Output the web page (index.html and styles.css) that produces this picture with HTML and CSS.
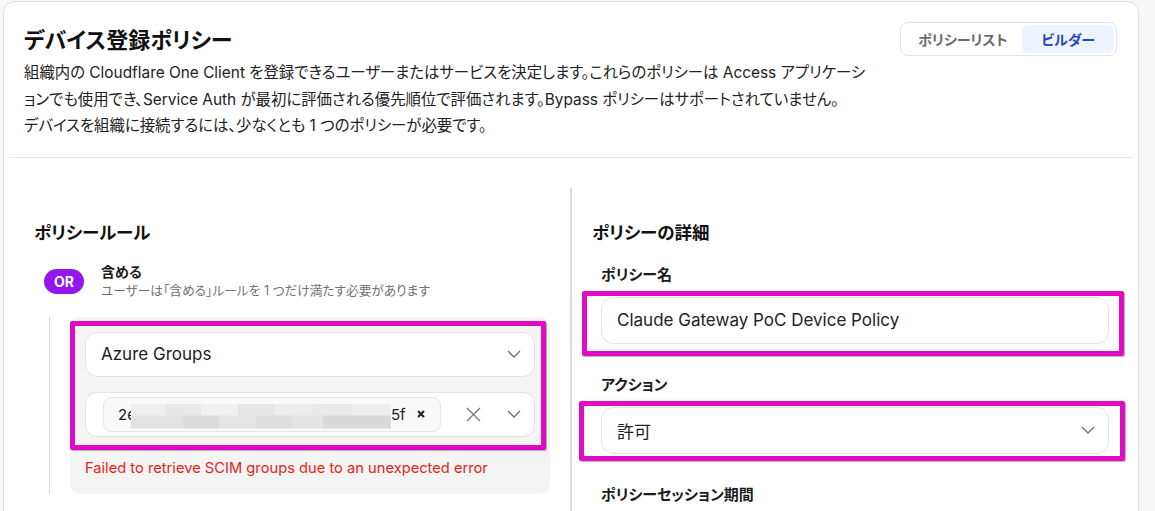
FILE: index.html
```html
<!DOCTYPE html>
<html lang="ja">
<head>
  <meta charset="utf-8">
  <meta name="viewport" content="width=device-width, initial-scale=1">
  <title>デバイス登録ポリシー</title>
  <link rel="stylesheet" href="styles.css">
</head>
<body>
  <div class="card">
    <header class="card-head">
      <div class="intro">
        <h1 class="page-title">デバイス登録ポリシー</h1>
        <p class="page-desc">組織内の Cloudflare One Client を登録できるユーザーまたはサービスを決定します。これらのポリシーは Access アプリケーシ<br>ョンでも使用でき、Service Auth が最初に評価される優先順位で評価されます。Bypass ポリシーはサポートされていません。<br>デバイスを組織に接続するには、少なくとも 1 つのポリシーが必要です。</p>
      </div>
      <div class="view-toggle">
        <button class="toggle-btn">ポリシーリスト</button>
        <button class="toggle-btn active">ビルダー</button>
      </div>
    </header>

    <hr class="divider">

    <div class="builder">
      <!-- left: rule groups -->
      <section class="rules">
        <h2 class="section-title">ポリシールール</h2>

        <div class="rule-head">
          <span class="or-badge">OR</span>
          <div>
            <div class="rule-name">含める</div>
            <div class="rule-hint">ユーザーは「含める」ルールを 1 つだけ満たす必要があります</div>
          </div>
        </div>

        <div class="rule-body">
          <div class="rule-box">
            <div class="select-stack">
              <div class="select">
                <span class="value">Azure Groups</span>
                <svg class="chevron" width="14" height="8" viewBox="0 0 14 8"><path d="M1 1l6 6 6-6"/></svg>
              </div>
              <div class="select multi">
                <span class="chip">
                  <span class="chip-text">2e</span>
                  <span class="redact"></span>
                  <span class="chip-text">5f</span>
                  <svg class="chip-remove" width="8" height="8" viewBox="0 0 8 8"><path d="M1 1l6 6M7 1L1 7"/></svg>
                </span>
                <span class="select-icons">
                  <svg class="clear" width="15" height="15" viewBox="0 0 15 15"><path d="M1 1l13 13M14 1L1 14"/></svg>
                  <svg class="chevron" width="14" height="8" viewBox="0 0 14 8"><path d="M1 1l6 6 6-6"/></svg>
                </span>
              </div>
              <span class="mark mark-rule"></span>
            </div>
            <p class="field-error">Failed to retrieve SCIM groups due to an unexpected error</p>
          </div>
        </div>
      </section>

      <!-- right: policy details form -->
      <section class="details">
        <h2 class="section-title">ポリシーの詳細</h2>

        <div class="field">
          <div class="field-label">ポリシー名</div>
          <div class="field-control">
            <div class="input-box">Claude Gateway PoC Device Policy</div>
            <span class="mark mark-name"></span>
          </div>
        </div>

        <div class="field">
          <div class="field-label">アクション</div>
          <div class="field-control">
            <div class="input-box">
              <span class="value">許可</span>
              <svg class="chevron" width="14" height="8" viewBox="0 0 14 8"><path d="M1 1l6 6 6-6"/></svg>
            </div>
            <span class="mark mark-action"></span>
          </div>
        </div>

        <div class="field">
          <div class="field-label">ポリシーセッション期間</div>
        </div>
      </section>
    </div>
  </div>
</body>
</html>
```

FILE: styles.css
```css
* {
  margin: 0;
  padding: 0;
  box-sizing: border-box;
}

body {
  font-family: Inter, "Noto Sans CJK JP", sans-serif;
  font-feature-settings: "palt";
  background: #f7f7f7;
  color: #1c1c1c;
  overflow: hidden;
}

.card {
  margin: 1px 0 0 3px;
  width: 1136px;
  min-height: 640px;
  background: #fff;
  border: 1px solid #dedede;
  border-radius: 12px;
}

.card-head {
  display: flex;
  justify-content: space-between;
  align-items: flex-start;
  padding: 20px 21px 0 20px;
}

.page-title {
  font-size: 22px;
  font-weight: 700;
  line-height: 30px;
  margin-top: 3px;
  color: #111;
}

.page-desc {
  font-size: 15.4px;
  line-height: 26.5px;
  margin-top: 5px;
  white-space: nowrap;
  color: #222;
}

.view-toggle {
  display: flex;
  flex-shrink: 0;
  padding: 2px;
  border: 1px solid #e4e4e4;
  border-radius: 8px;
}

.toggle-btn {
  font: inherit;
  font-size: 14px;
  font-weight: 700;
  height: 28px;
  padding: 0 15px;
  border: 0;
  border-radius: 6px;
  background: none;
  color: #6b6b6b;
  white-space: nowrap;
}

.toggle-btn.active {
  padding: 0 19px;
  background: #edf4ff;
  color: #2447c2;
}

.divider {
  border: 0;
  border-top: 1px solid #e6e6e6;
  margin: 17px 5px 0;
}

.builder {
  display: grid;
  grid-template-columns: 563px 1fr;
  margin: 30px 5px 0;
}

.rules {
  padding: 33px 20px 0 25px;
  border-right: 2px solid #dadada;
  min-height: 420px;
}

.details {
  padding: 33px 24px 0 20px;
}

.section-title {
  font-size: 17.5px;
  font-weight: 700;
  line-height: 24px;
  color: #111;
}

/* rule group header */
.rule-head {
  display: flex;
  align-items: center;
  gap: 17px;
  margin: 18px 0 0 10px;
}

.or-badge {
  display: flex;
  align-items: center;
  justify-content: center;
  width: 40px;
  height: 25px;
  border-radius: 13px;
  background: #9616f0;
  color: #fff;
  font-size: 14px;
  font-weight: 700;
}

.rule-name {
  font-size: 14px;
  font-weight: 700;
  line-height: 18px;
}

.rule-hint {
  font-size: 12.7px;
  line-height: 20px;
  color: #727272;
}

.rule-body {
  margin: 16px 0 0 15px;
  padding-left: 20px;
  border-left: 1px solid #d6d6d6;
}

.rule-box {
  background: #f4f4f4;
  border-radius: 10px;
  padding: 15px 15px 16px;
}

.select-stack {
  position: relative;
  display: flex;
  flex-direction: column;
  gap: 15px;
}

.select {
  display: flex;
  align-items: center;
  height: 45px;
  padding: 0 13px 0 15px;
  background: #fff;
  border: 1px solid #e2e2e2;
  border-radius: 12px;
  font-size: 17px;
}

.select .value {
  flex: 1;
}

.select.multi {
  padding-left: 17px;
}

.chip {
  display: flex;
  align-items: center;
  width: 338px;
  height: 35px;
  padding: 0 15px 0 14px;
  background: #f9f9f9;
  border: 1px solid #e6e6e6;
  border-radius: 8px;
  font-size: 15px;
}

/* pixelated redaction over the group id */
.redact {
  width: 260px;
  height: 25px;
  margin: 4px 0 0 -5px;
  background:
    linear-gradient(90deg, #efefef 0 13%, #e8e8e8 13% 27%, #f1f1f1 27% 41%, #e6e6e6 41% 55%, #ededed 55% 70%, #e9e9e9 70% 85%, #eeeeee 85%) top / 100% 46% no-repeat,
    linear-gradient(90deg, #e3e3e3 0 20%, #dcdcdc 20% 34%, #e5e5e5 34% 48%, #dedede 48% 62%, #e4e4e4 62% 74%, #d9d9d9 74% 100%) bottom / 100% 54% no-repeat;
}

.chip-remove {
  margin-left: auto;
  stroke: #222;
  stroke-width: 2;
  fill: none;
}

.select-icons {
  display: flex;
  align-items: center;
  gap: 26px;
  margin-left: auto;
}

.clear {
  stroke: #7a7a7a;
  stroke-width: 1.4;
  fill: none;
}

.chevron {
  stroke: #6e6e6e;
  stroke-width: 1.3;
  fill: none;
}

.field-error {
  margin-top: 21px;
  font-size: 14.7px;
  line-height: 20px;
  color: #e3241b;
}

/* details form */
.field {
  padding-left: 9px;
  margin-top: 31px;
}

.section-title + .field {
  margin-top: 20px;
}

.field-label {
  font-size: 15px;
  font-weight: 700;
  line-height: 20px;
  margin-bottom: 12px;
}

.field-control {
  position: relative;
}

.input-box {
  display: flex;
  align-items: center;
  height: 47px;
  padding: 0 13px 0 15px;
  border: 1px solid #e3e3e3;
  border-radius: 12px;
  font-size: 17px;
  color: #222;
}

.input-box .value {
  flex: 1;
}

/* magenta highlight frames drawn over the form */
.mark {
  position: absolute;
  border: 5px solid #e10bc5;
  border-radius: 2px;
  box-shadow: 1px 1px 1px rgba(0, 0, 0, 0.3);
  pointer-events: none;
}

.mark-rule {
  inset: -11px -11px -13px -15px;
}

.mark-name {
  inset: -6px -15px -12px -19px;
}

.mark-action {
  inset: -6px -16px -7px -22px;
}
```
